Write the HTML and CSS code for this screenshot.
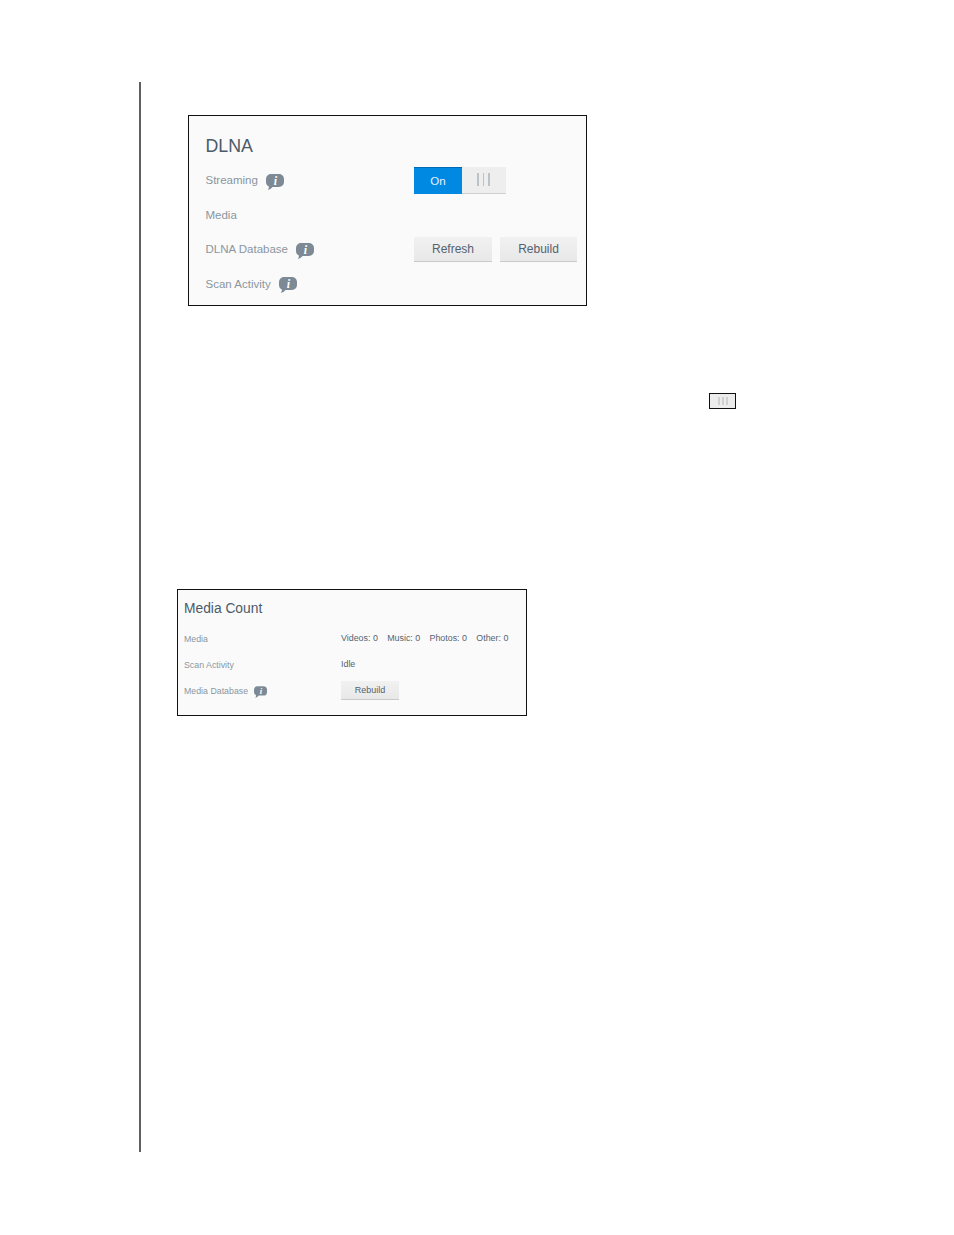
FILE: index.html
```html
<!DOCTYPE html>
<html lang="en">
<head>
    <meta charset="UTF-8">
    <title>DLNA Media</title>
    <link rel="stylesheet" href="styles.css">
</head>
<body>
    <div class="content">
        <div class="panel dlna">
            <h2>DLNA</h2>
            <div class="rows">
                <div class="label">Streaming
                    <svg class="info" viewBox="0 0 18 16"><path d="M5 0h8a5 5 0 0 1 5 5v3a5 5 0 0 1-5 5H6.500C5.500 14.500 3.500 15.700 1.700 16 2.600 15 3 13.800 2.900 12.500A5 5 0 0 1 0 8V5a5 5 0 0 1 5-5z"/><text x="9.500" y="11" text-anchor="middle">i</text></svg>
                </div>
                <div class="control">
                    <div class="toggle">
                        <span class="toggle-on">On</span>
                        <span class="toggle-off"><i></i><i></i><i></i></span>
                    </div>
                </div>
                <div class="label">Media</div>
                <div class="control"></div>
                <div class="label">DLNA Database
                    <svg class="info" viewBox="0 0 18 16"><path d="M5 0h8a5 5 0 0 1 5 5v3a5 5 0 0 1-5 5H6.500C5.500 14.500 3.500 15.700 1.700 16 2.600 15 3 13.800 2.900 12.500A5 5 0 0 1 0 8V5a5 5 0 0 1 5-5z"/><text x="9.500" y="11" text-anchor="middle">i</text></svg>
                </div>
                <div class="control buttons">
                    <button class="btn refresh">Refresh</button>
                    <button class="btn rebuild">Rebuild</button>
                </div>
                <div class="label">Scan Activity
                    <svg class="info" viewBox="0 0 18 16"><path d="M5 0h8a5 5 0 0 1 5 5v3a5 5 0 0 1-5 5H6.500C5.500 14.500 3.500 15.700 1.700 16 2.600 15 3 13.800 2.900 12.500A5 5 0 0 1 0 8V5a5 5 0 0 1 5-5z"/><text x="9.500" y="11" text-anchor="middle">i</text></svg>
                </div>
                <div class="control"></div>
            </div>
        </div>

        <div class="mini-toggle"><i></i><i></i><i></i></div>

        <div class="panel count">
            <h2>Media Count</h2>
            <div class="rows">
                <div class="label">Media</div>
                <div class="control values">
                    <span>Videos: 0</span>
                    <span>Music: 0</span>
                    <span>Photos: 0</span>
                    <span>Other: 0</span>
                </div>
                <div class="label">Scan Activity</div>
                <div class="control values"><span>Idle</span></div>
                <div class="label">Media Database
                    <svg class="info" viewBox="0 0 18 16"><path d="M5 0h8a5 5 0 0 1 5 5v3a5 5 0 0 1-5 5H6.500C5.500 14.500 3.500 15.700 1.700 16 2.600 15 3 13.800 2.900 12.500A5 5 0 0 1 0 8V5a5 5 0 0 1 5-5z"/><text x="9.500" y="11" text-anchor="middle">i</text></svg>
                </div>
                <div class="control last"><button class="btn small">Rebuild</button></div>
            </div>
        </div>
    </div>
</body>
</html>
```

FILE: styles.css
```css
html, body {
    margin: 0;
    background: #fff;
}

body {
    height: 1235px;
    padding: 82px 0 0 139px;
    box-sizing: border-box;
    overflow: hidden;
    font-family: "Liberation Sans", Arial, sans-serif;
}

.content {
    width: 700px;
    height: 1070px;
    padding: 33px 0 0 36px;
    box-sizing: border-box;
    border-left: 2px solid #5f5f5f;
}

.panel {
    box-sizing: border-box;
    background: #fafafa;
    border: 1px solid #111;
}

.panel h2 {
    margin: 0;
    font-weight: normal;
    color: #4a5a68;
}

.label {
    display: flex;
    align-items: center;
    color: #8b969e;
}

.control {
    display: flex;
    align-items: center;
}

.rows {
    display: grid;
}

/* bulle info */
.info {
    fill: #7d8a96;
    flex: none;
}

.info text {
    fill: #fff;
    font-family: "Liberation Serif", serif;
    font-style: italic;
    font-weight: bold;
    font-size: 12px;
}

.btn {
    padding: 0;
    border: none;
    border-bottom: 1px solid #c9c9c9;
    background: linear-gradient(#f1f1f1, #e8e8e8);
    color: #55626e;
    font-family: inherit;
}

/* panneau DLNA */
.dlna {
    width: 399px;
    height: 191px;
    margin-left: 11px;
    padding: 20px 8px 0 16.500px;
}

.dlna h2 {
    font-size: 17.800px;
    line-height: 20px;
    margin-bottom: 7px;
}

.dlna .rows {
    grid-template-columns: 208.500px 1fr;
    grid-auto-rows: 34.500px;
}

.dlna .label {
    font-size: 11.500px;
}

.dlna .info {
    width: 18px;
    height: 16px;
    margin-left: 8px;
    margin-top: 3px;
}

.toggle {
    display: flex;
    width: 92px;
    height: 27px;
}

.toggle-on {
    width: 48px;
    background: #0089e3;
    border-top: 1px solid #0069b4;
    box-sizing: border-box;
    color: #e8f4fc;
    font-size: 11.500px;
    line-height: 26px;
    text-align: center;
}

.toggle-off {
    flex: 1;
    display: flex;
    justify-content: center;
    align-items: center;
    gap: 4px;
    padding-right: 1px;
    background: #eeeeee;
    border-bottom: 1px solid #cfcfcf;
}

.toggle-off i {
    width: 1.500px;
    height: 13px;
    background: #bcc2c7;
}

.buttons {
    gap: 8px;
}

.dlna .btn {
    height: 25px;
    font-size: 12px;
}

.refresh {
    width: 78px;
}

.rebuild {
    width: 77px;
}

/* petit interrupteur dans le texte */
.mini-toggle {
    display: flex;
    justify-content: center;
    align-items: center;
    gap: 2px;
    box-sizing: border-box;
    width: 27px;
    height: 16px;
    margin: 87px 0 180px 532px;
    background: #ececec;
    border: 1px solid #111;
}

.mini-toggle i {
    width: 2px;
    height: 8px;
    background: #d0d0d0;
}

/* panneau Media Count */
.count {
    width: 350px;
    height: 127px;
    padding: 11px 6px 0 6px;
}

.count h2 {
    font-size: 13.800px;
    line-height: 16px;
    margin-bottom: 9px;
}

.count .rows {
    grid-template-columns: 157px 1fr;
    grid-auto-rows: 26px;
}

.count .label {
    font-size: 8.800px;
}

.count .info {
    width: 13px;
    height: 12px;
    margin-left: 6px;
    margin-top: 1px;
}

.values {
    gap: 9.300px;
    padding-bottom: 2px;
    font-size: 8.900px;
    color: #56636e;
}

.last {
    padding-bottom: 1px;
}

.btn.small {
    width: 58px;
    height: 19px;
    font-size: 9px;
}
```
